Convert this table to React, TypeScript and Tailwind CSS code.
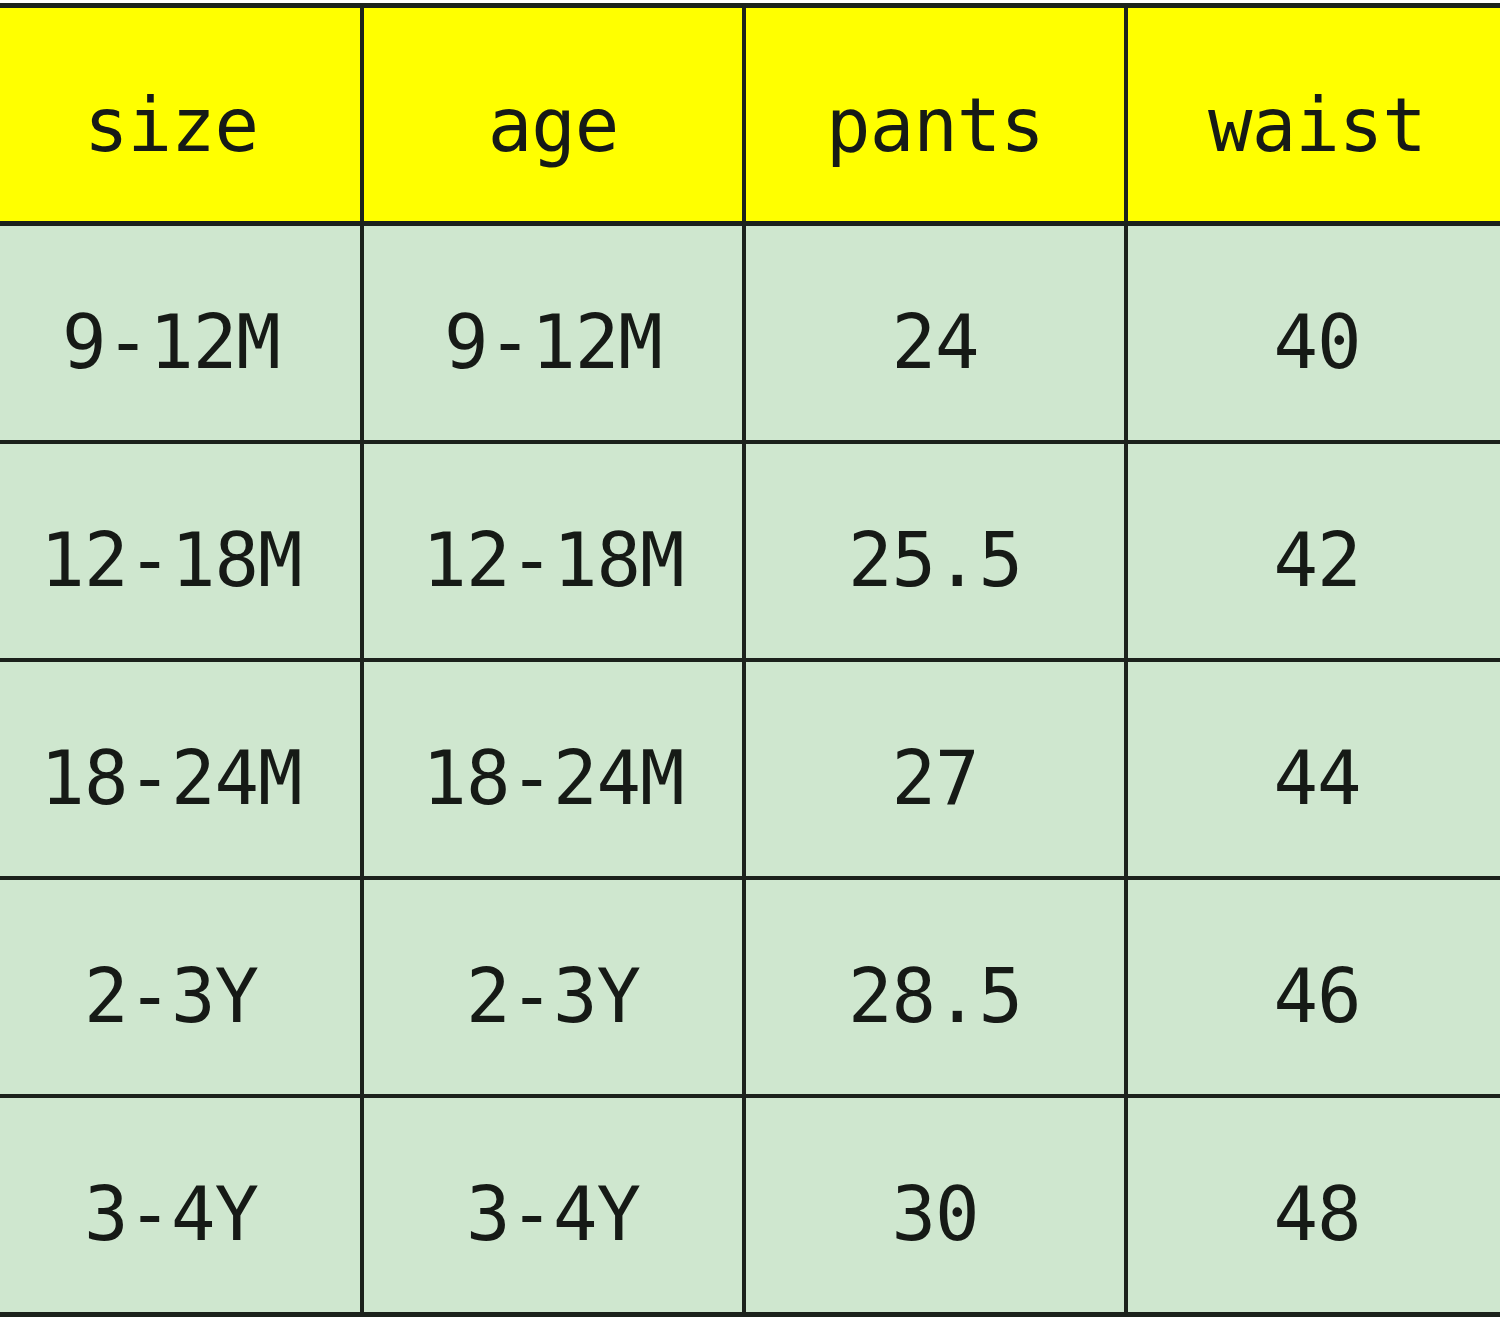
const header = ["size", "age", "pants", "waist"];

const rows = [
  ["9-12M", "9-12M", "24", "40"],
  ["12-18M", "12-18M", "25.5", "42"],
  ["18-24M", "18-24M", "27", "44"],
  ["2-3Y", "2-3Y", "28.5", "46"],
  ["3-4Y", "3-4Y", "30", "48"],
];

const App = () => {
  return (
    <div className="min-h-screen w-[1500px] overflow-hidden bg-white font-['DejaVu_Sans_Mono',monospace] text-[74px] text-[#161a16]">
      <div className="mt-[3px] -ml-[18px] w-[1524px] border-y-[5px] border-[#1c221c] bg-[#1c221c]">
        {/* Header */}
        <div className="grid grid-cols-[repeat(4,378px)] gap-x-[4px]">
          {header.map((h) => (
            <div
              key={h}
              className="flex h-[213px] items-center justify-center bg-[#ffff00] pt-[22px] tracking-[-1px]"
            >
              {h}
            </div>
          ))}
        </div>

        {/* Body */}
        <div className="mt-[5px] grid grid-cols-[repeat(4,378px)] gap-x-[4px] gap-y-[4px]">
          {rows.map((row, i) =>
            row.map((cell, j) => (
              <div
                key={`${i}-${j}`}
                className="flex h-[214px] items-center justify-center bg-[#cfe7cf] pt-[18px] tracking-[-1px]"
              >
                {cell}
              </div>
            ))
          )}
        </div>
      </div>
    </div>
  );
};

export default App;
